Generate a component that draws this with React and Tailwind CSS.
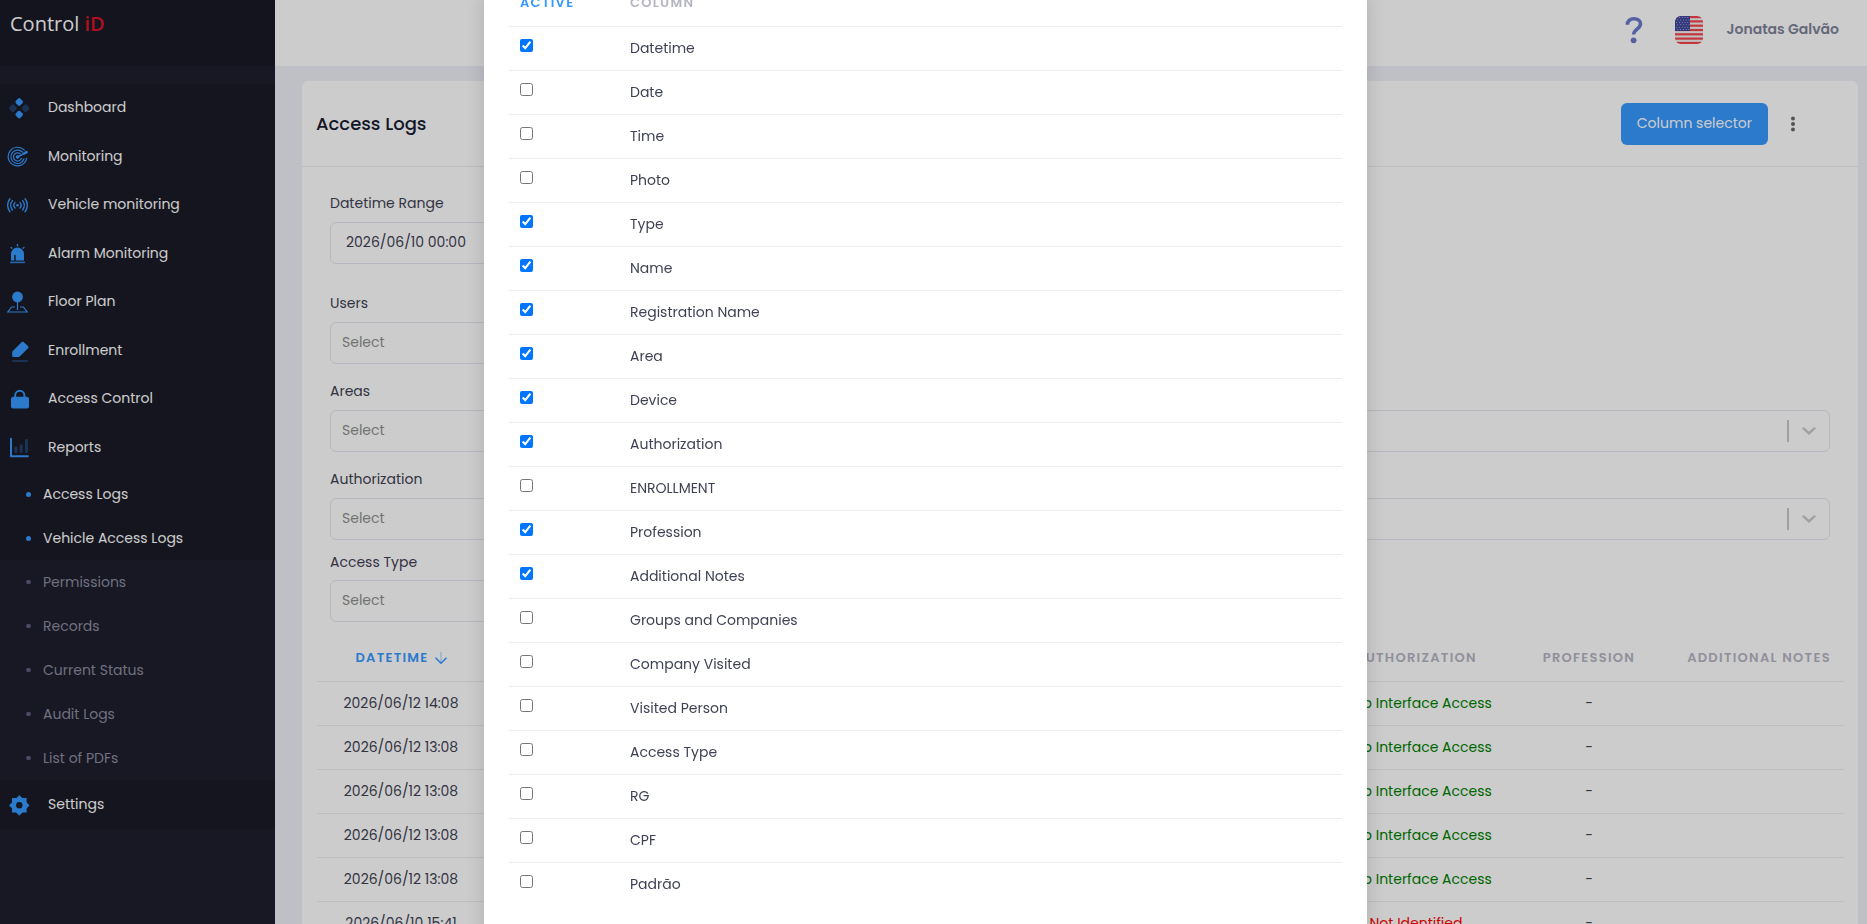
import React from 'react';

const BLUE = '#3699ff';

const icons = {
  dashboard: (
    <g fill={BLUE}>
      <rect x="9" y="2.7" width="6.4" height="6.4" rx="1.8" transform="rotate(45 12.2 5.9)" />
      <rect x="9" y="15.4" width="6.4" height="6.4" rx="1.8" transform="rotate(45 12.2 18.6)" />
      <rect x="2.7" y="9" width="6.4" height="6.4" rx="1.8" transform="rotate(45 5.9 12.2)" opacity="0.3" />
      <rect x="15.4" y="9" width="6.4" height="6.4" rx="1.8" transform="rotate(45 18.6 12.2)" opacity="0.3" />
    </g>
  ),
  monitoring: (
    <g fill="none" stroke={BLUE} strokeWidth="1.2" strokeLinecap="round">
      <path d="M17.3 5.2A9.3 9.3 0 1 0 19.6 13.4" />
      <path d="M15.3 7A6.7 6.7 0 1 0 17 13.8" />
      <path d="M13 8.6A4.1 4.1 0 1 0 14.4 13.4" />
      <path d="M10.5 12L19.5 7.2" strokeWidth="1.6" />
      <circle cx="10.5" cy="12" r="1.2" fill={BLUE} />
      <path d="M17 8.5L19.6 7.1" strokeWidth="2.4" />
    </g>
  ),
  vehicle: (
    <g fill="none" stroke={BLUE} strokeWidth="1.4" strokeLinecap="round">
      <circle cx="10.5" cy="12.3" r="1.3" fill={BLUE} stroke="none" />
      <path d="M8 9.6a4 4 0 0 0 0 5.4M13 9.6a4 4 0 0 1 0 5.4" />
      <path d="M5.4 7.6a7.4 7.4 0 0 0 0 9.4M15.6 7.6a7.4 7.4 0 0 1 0 9.4" />
      <path d="M2.9 5.8a10.6 10.6 0 0 0 0 13M18.1 5.8a10.6 10.6 0 0 1 0 13" />
    </g>
  ),
  alarm: (
    <g fill={BLUE}>
      <path d="M4 18.6V12a6.5 6.5 0 0 1 13 0v6.6H8.7V13H7.3v5.6Z" />
      <rect x="3" y="19.6" width="15" height="1.6" opacity="0.8" />
      <path d="M10.5 2v2.2M3.6 5.2l1.8 1.3M17.4 5.2l-1.8 1.3" stroke={BLUE} strokeWidth="1.4" />
    </g>
  ),
  floor: (
    <g fill="none" stroke={BLUE} strokeWidth="1.2">
      <circle cx="10.5" cy="7" r="5.4" fill={BLUE} stroke="none" />
      <path d="M10.5 12v8" />
      <path d="M8 17H4.6L.8 22h19.4l-3.8-5H13" />
    </g>
  ),
  enrollment: (
    <g fill={BLUE}>
      <path d="M5.6 12.2 14.8 2.9q.9-.8 1.8 0l4.6 4.4q.9.9.1 1.8l-8.6 8.4q-.4.4-1 .4H6.4q-1.2 0-1.2-1.2v-3.4q0-.7.4-1.1Z" />
      <rect x="5" y="21" width="16" height="2" rx="1" opacity="0.3" />
    </g>
  ),
  lock: (
    <g>
      <rect x="4" y="9.8" width="18" height="11.6" rx="2.2" fill={BLUE} />
      <path d="M8.2 10.5V8.4a4.6 4.6 0 0 1 9.2 0v2.1" fill="none" stroke={BLUE} strokeWidth="1.9" />
    </g>
  ),
  reports: (
    <g fill={BLUE}>
      <path d="M3 2.6q0-.8 1-.8t1 .8V19.2h16q.8 0 .8 1t-.8 1H4q-1 0-1-1Z" />
      <rect x="7.4" y="10.6" width="3" height="6.4" rx="1.4" opacity="0.3" />
      <rect x="12.6" y="8.4" width="3" height="8.6" rx="1.4" opacity="0.3" />
      <rect x="18" y="3" width="3" height="14" rx="1.4" opacity="0.3" />
    </g>
  ),
  settings: (
    <g fill={BLUE}>
      <rect x="5" y="5" width="14.6" height="14.6" rx="0.6" />
      <rect x="5" y="5" width="14.6" height="14.6" rx="0.6" transform="rotate(45 12.3 12.3)" />
      <circle cx="12.3" cy="12.3" r="3.2" fill="#1b1b28" />
    </g>
  ),
};

const menu = [
  ['Dashboard', 'dashboard'],
  ['Monitoring', 'monitoring'],
  ['Vehicle monitoring', 'vehicle'],
  ['Alarm Monitoring', 'alarm'],
  ['Floor Plan', 'floor'],
  ['Enrollment', 'enrollment'],
  ['Access Control', 'lock'],
  ['Reports', 'reports'],
];

const reports = [
  ['Access Logs', true],
  ['Vehicle Access Logs', true],
  ['Permissions', false],
  ['Records', false],
  ['Current Status', false],
  ['Audit Logs', false],
  ['List of PDFs', false],
];

const columns = [
  ['Datetime', true],
  ['Date', false],
  ['Time', false],
  ['Photo', false],
  ['Type', true],
  ['Name', true],
  ['Registration Name', true],
  ['Area', true],
  ['Device', true],
  ['Authorization', true],
  ['ENROLLMENT', false],
  ['Profession', true],
  ['Additional Notes', true],
  ['Groups and Companies', false],
  ['Company Visited', false],
  ['Visited Person', false],
  ['Access Type', false],
  ['RG', false],
  ['CPF', false],
  ['Padrão', false],
];

const logs = [
  ['2026/06/12 14:08', 'Web Interface Access', true],
  ['2026/06/12 13:08', 'Web Interface Access', true],
  ['2026/06/12 13:08', 'Web Interface Access', true],
  ['2026/06/12 13:08', 'Web Interface Access', true],
  ['2026/06/12 13:08', 'Web Interface Access', true],
  ['2026/06/10 15:41', 'Not Identified', false],
];

function MenuItem({ label, icon }) {
  return (
    <a href="#" className="flex items-center gap-[17px] bg-[#1b1b28] pl-[7px] text-white">
      <svg viewBox="0 0 24 24" className="size-6 shrink-0" aria-hidden="true">
        {icons[icon]}
      </svg>
      <span className="pb-[2px]">{label}</span>
    </a>
  );
}

function Sidebar() {
  return (
    <aside className="w-[275px] shrink-0 bg-[#1e1e2d]">
      <div className="h-[66px] bg-[#1a1a27] px-[10px] pt-[10px] font-['Open_Sans',sans-serif] text-xl leading-7 text-white">
        Control <span className="font-semibold text-[#d7142a]">iD</span>
      </div>
      <nav className="pt-[18px]">
        <div className="grid min-h-[388px] auto-rows-fr">
          {menu.map(([label, icon]) => (
            <MenuItem key={label} label={label} icon={icon} />
          ))}
        </div>
        {reports.map(([label, active]) => (
          <a
            key={label}
            href="#"
            className={
              active
                ? 'flex h-11 items-center gap-3 bg-[#1b1b28] pl-[26px] text-white'
                : 'flex h-11 items-center gap-3 pl-[26px] text-[#8c8da0]'
            }
          >
            <span className={active ? 'size-[5px] rounded-full bg-[#3699ff]' : 'h-1 w-[5px] rounded-full bg-[#5c5e81]'} />
            {label}
          </a>
        ))}
        <div className="grid h-[49px]">
          <MenuItem label="Settings" icon="settings" />
        </div>
      </nav>
    </aside>
  );
}

function Flag() {
  const stars = [];
  for (let r = 0; r < 6; r++) {
    for (let c = 0; c < 5; c++) {
      stars.push([1.6 + c * 2.8 + (r % 2) * 1.2, 1.6 + r * 2.4]);
    }
  }
  return (
    <svg viewBox="0 0 28 28" className="size-7 overflow-hidden rounded-md" aria-hidden="true">
      <rect width="28" height="28" fill="#f0f0f0" />
      {[0, 1, 2, 3, 4, 5, 6].map((i) => (
        <rect key={i} y={i * 4.308} width="28" height="2.154" fill="#f7434c" />
      ))}
      <rect width="15" height="15" fill="#41479b" />
      {stars.map(([x, y], i) => (
        <circle key={i} cx={x} cy={y} r="0.5" fill="#c5c8ea" />
      ))}
    </svg>
  );
}

function Header() {
  return (
    <header className="flex h-[66px] items-center justify-end bg-white pr-7 pb-[6px]">
      <button type="button" aria-label="Help" className="mr-8">
        <svg viewBox="0 0 18 28" className="h-7 w-[18px]" fill="none">
          <path d="M2.4 8.8C2.4 5 5 2.8 8.9 2.8c4 0 6.6 2 6.6 5.2 0 4.7-6.8 5-6.8 10.6" stroke="#6b7acc" strokeWidth="3.6" />
          <circle cx="8.6" cy="24.3" r="2.9" fill="#6b7acc" />
        </svg>
      </button>
      <button type="button" aria-label="Language" className="mr-6">
        <Flag />
      </button>
      <span className="pb-[2px] font-semibold text-[#7e8299]">Jonatas Galvão</span>
    </header>
  );
}

function SelectField({ id, label, wide, compact }) {
  return (
    <div className={compact ? '-mt-[5px] mb-[17px]' : 'mb-[17px]'}>
      <label htmlFor={id} className={compact ? 'mb-2 block' : 'mb-[9px] block'}>
        {label}
      </label>
      <div className={wide ? 'relative' : 'relative w-1/2'}>
        <select
          id={id}
          className="h-[42px] w-full appearance-none rounded-md border border-[#e4e6ef] bg-white px-[11px] pb-[2px] text-[#8f8f8f]"
        >
          <option>Select</option>
        </select>
        <div className="pointer-events-none absolute inset-y-0 right-[14px] flex items-center gap-[13px] text-[#c8c8c8]">
          <span className="h-[22px] w-[2px] bg-[#c8c8c8]" />
          <svg viewBox="0 0 14 8" className="h-2 w-[14px]" fill="none" stroke="currentColor" strokeWidth="2.4">
            <path d="M1.6 1.4L7 6.4l5.4-5" strokeLinecap="round" />
          </svg>
        </div>
      </div>
    </div>
  );
}

function Filters() {
  return (
    <form className="px-7 pt-[26px]">
      <div className="mb-[29px]">
        <label htmlFor="range" className="mb-[9px] block">
          Datetime Range
        </label>
        <input
          id="range"
          type="text"
          defaultValue="2026/06/10 00:00"
          className="h-[42px] w-1/3 rounded-md border border-[#e4e6ef] bg-white px-[15px] pb-[2px]"
        />
      </div>
      <SelectField id="users" label="Users" />
      <SelectField id="areas" label="Areas" wide />
      <SelectField id="authorization" label="Authorization" wide />
      <SelectField id="access-type" label="Access Type" compact />
    </form>
  );
}

function LogsTable() {
  const th = 'pt-[9px] pb-[13px] text-[13px] leading-5 font-semibold tracking-widest whitespace-nowrap';
  return (
    <div className="pr-[14px] pl-[15px]">
      <table className="w-full table-fixed text-center">
        <colgroup>
          <col className="w-[168px]" />
          <col />
          <col className="w-[176px]" />
          <col className="w-[170px]" />
          <col className="w-[170px]" />
        </colgroup>
        <thead className="border-b border-[#ebedf3] text-[#b5b5c3]">
          <tr>
            <th className={th}>
              <span className="inline-flex items-center gap-[6px] text-[#3699ff]">
                DATETIME
                <svg viewBox="0 0 12 14" className="h-[14px] w-3" fill="none" stroke="currentColor" strokeWidth="1.6">
                  <path d="M6 1v11" opacity="0.3" />
                  <path d="M1 7.2l5 5 5-5" strokeLinecap="round" />
                </svg>
              </span>
            </th>
            <th />
            <th className={th}>AUTHORIZATION</th>
            <th className={th}>PROFESSION</th>
            <th className={th}>ADDITIONAL NOTES</th>
          </tr>
        </thead>
        <tbody>
          {logs.map(([date, status, ok], idx) => (
            <tr key={idx} className="h-11 border-b border-[#ebedf3]">
              <td className="pb-[2px]">{date}</td>
              <td />
              <td className={ok ? 'pb-[2px] whitespace-nowrap text-[#008000]' : 'pb-[2px] whitespace-nowrap text-[#ff0000]'}>
                {status}
              </td>
              <td className="pb-[2px]">-</td>
              <td />
            </tr>
          ))}
        </tbody>
      </table>
    </div>
  );
}

function ColumnSelector() {
  const th = 'pb-[13px] pl-[11px] text-[13px] leading-5 font-semibold tracking-widest';
  return (
    <div className="fixed inset-0 flex justify-center overflow-hidden bg-black/20 pr-4">
      <div
        role="dialog"
        aria-label="Column selector"
        className="-mt-[7px] w-full max-w-[883px] self-start bg-white px-[25px] pb-12 shadow-[0_0_20px_rgba(0,0,0,0.15)]"
      >
        <table className="w-full table-fixed text-left">
          <thead>
            <tr className="border-b border-[#ebedf3]">
              <th className={`${th} w-[110px] text-[#3699ff]`}>ACTIVE</th>
              <th className={`${th} text-[#b5b5c3]`}>COLUMN</th>
            </tr>
          </thead>
          <tbody>
            {columns.map(([name, active], idx) => (
              <tr key={name} className="h-11 border-b border-[#ebedf3] last:border-b-0">
                <td className="pt-3 pl-[11px] align-top">
                  <input id={`col-${idx}`} type="checkbox" defaultChecked={active} className="block size-[13px]" />
                </td>
                <td className="pb-[2px] pl-[11px]">
                  <label htmlFor={`col-${idx}`}>{name}</label>
                </td>
              </tr>
            ))}
          </tbody>
        </table>
      </div>
    </div>
  );
}

export default function App() {
  return (
    <div className="flex h-screen overflow-hidden bg-[#eef0f8] font-['Poppins','Inter',sans-serif] text-sm leading-5 text-[#3f4254]">
      <Sidebar />
      <div className="min-w-0 flex-1">
        <Header />
        <main className="pt-[15px] pr-[9px] pl-[27px]">
          <section className="rounded-md bg-white">
            <div className="flex h-[86px] items-center border-b border-[#ebedf3] pr-10 pl-[14px]">
              <h1 className="flex-1 text-lg font-medium text-[#181c32]">Access Logs</h1>
              <button type="button" className="h-[42px] rounded-md bg-[#3699ff] px-4 pb-[2px] text-white">
                Column selector
              </button>
              <button type="button" aria-label="More" className="flex h-[42px] w-[50px] items-center justify-center">
                <svg viewBox="0 0 4 16" className="h-4 w-1" fill="#6a6a6a">
                  <circle cx="2" cy="2.4" r="2" />
                  <circle cx="2" cy="8" r="2" />
                  <circle cx="2" cy="13.6" r="2" />
                </svg>
              </button>
            </div>
            <Filters />
            <LogsTable />
          </section>
        </main>
      </div>
      <ColumnSelector />
    </div>
  );
}
